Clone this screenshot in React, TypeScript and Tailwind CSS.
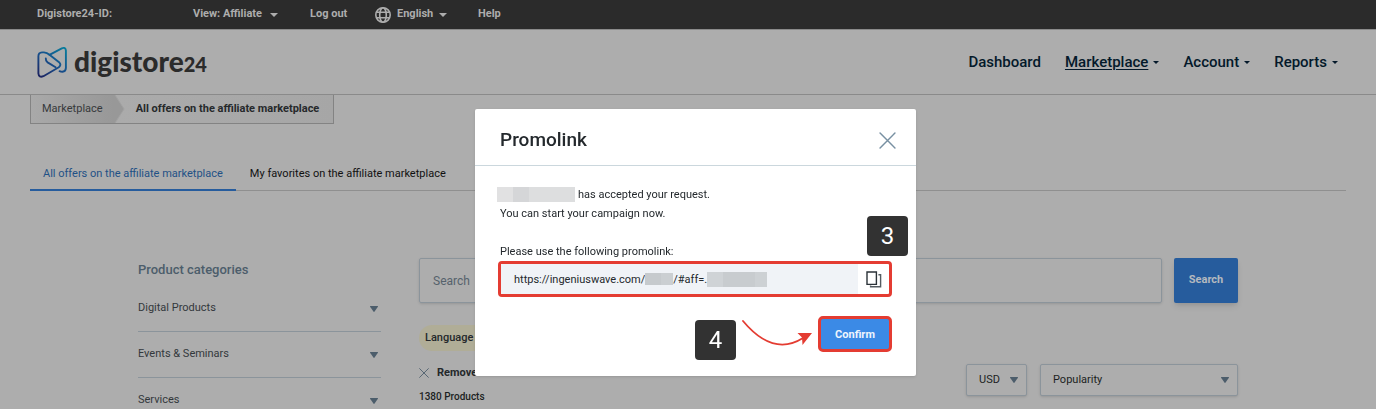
import React from 'react'

const css = {
	topItem: 'flex items-center text-[11px] font-bold text-[#adadad]',
	navItem: 'flex items-center text-[15px] font-medium text-[#04192a]',
	select: 'h-full w-full appearance-none rounded-xs border border-[#8b949b] bg-[#adadad] pl-3 text-[11px] text-[#1c1f22] shadow-sm outline-none',
	badge: 'flex h-10 w-[41px] items-center justify-center rounded-sm bg-[#323232] text-2xl text-white',
}

const categories = ['Digital Products', 'Events & Seminars', 'Services']

const navLinks = [
	{ label: 'Dashboard', menu: false },
	{ label: 'Marketplace', menu: true, active: true },
	{ label: 'Account', menu: true },
	{ label: 'Reports', menu: true },
]

const Caret = ({ className }: { className?: string }) => (
	<svg className={ className } viewBox="0 0 8 4" fill="currentColor" aria-hidden="true">
		<path d="M0 0h8L4 4z" />
	</svg>
)

const Triangle = ({ className }: { className?: string }) => (
	<svg className={ className } width="8" height="6" viewBox="0 0 8 6" fill="#4c5d6b" aria-hidden="true">
		<path d="M.5 0h7q.8 0 .4.7L4.6 5.6Q4 6.3 3.4 5.6L.1.7Q-.3 0 .5 0z" />
	</svg>
)

const Cross = ({ className }: { className?: string }) => (
	<svg className={ className } viewBox="0 0 16 16" fill="none" stroke="currentColor" strokeWidth="1.4" strokeLinecap="round" aria-hidden="true">
		<path d="M1 1l14 14M15 1L1 15" />
	</svg>
)

const Globe = () => (
	<svg width="16" height="16" viewBox="0 0 16 16" fill="none" stroke="currentColor" strokeWidth="1.6" aria-hidden="true">
		<circle cx="8" cy="8" r="7.2" />
		<ellipse cx="8" cy="8" rx="3.3" ry="7.2" />
		<path d="M1.3 5.3h13.4M1.3 10.7h13.4" />
	</svg>
)

const Logo = () => (
	<a href="#" className="flex items-center gap-[7px]">
		<svg width="30" height="31" viewBox="0 0 30 31" fill="none" strokeWidth="1.9" strokeLinecap="round" strokeLinejoin="round" aria-hidden="true">
			<defs>
				<linearGradient id="mark" x1="4" y1="30" x2="26" y2="0" gradientUnits="userSpaceOnUse">
					<stop stopColor="#1c2461" />
					<stop offset=".5" stopColor="#17508c" />
					<stop offset="1" stopColor="#087c9c" />
				</linearGradient>
			</defs>
			<g stroke="url(#mark)">
				<path d="M12.500 7.800L24.800 1.400Q28.600-.2 28.900 3.600V21Q28.700 24.600 25.500 24.800Q23.800 24.800 22.600 24.200" />
				<path d="M12.500 7.800Q10 5.600 7 5.400H5Q1.400 5.600 1.400 9.200V26.400Q1.800 31 6.400 29.200L21.800 20.200Q24.600 18 22.400 15.600L12.500 7.800" />
				<path d="M18.600 20.200L10.600 15.400Q8.600 14 8.800 11.400" />
			</g>
		</svg>
		<span className="pb-[2px] font-['Lato',sans-serif] text-[28px] leading-8 font-black text-[#2b2b2b]">
			digistore<span className="text-xl">24</span>
		</span>
	</a>
)

const TopBar = () => (
	<div className="flex h-[29px] items-center bg-[#2b2b2b] px-[37px]">
		<span className={ `${css.topItem} w-[156px]` }>Digistore24-ID:</span>
		<button type="button" className={ `${css.topItem} w-[117px] gap-2` }>
			View: Affiliate <Caret className="w-2" />
		</button>
		<a href="#" className={ `${css.topItem} w-[65px]` }>Log out</a>
		<button type="button" className={ `${css.topItem} w-[103px] gap-[6px]` }>
			<Globe /> English <Caret className="w-2" />
		</button>
		<a href="#" className={ css.topItem }>Help</a>
	</div>
)

const Header = () => (
	<header className="flex h-[66px] items-center justify-between border-y border-[#8a8a8a] pr-[38px] pl-[37px]">
		<Logo />
		<nav className="flex gap-6">
			{ navLinks.map(({ label, menu, active }) => (
				<a key={ label } href="#" className={ `${css.navItem} gap-[5px]` }>
					<span className={ active ? 'underline underline-offset-2' : '' }>{ label }</span>
					{ menu && <Caret className="w-[6px]" /> }
				</a>
			)) }
		</nav>
	</header>
)

const Breadcrumb = () => (
	<nav className="mx-[30px] flex h-[29px] w-fit border border-t-0 border-[#838383] bg-linear-to-r from-[#adadad] to-[#a6a6a6] text-[11px]">
		<a href="#" className="flex items-center bg-linear-to-r from-[#a9a9a9] to-[#989898] pr-[10px] pl-[11px] text-[#36393b]">Marketplace</a>
		<svg className="h-full w-3" viewBox="0 0 12 28" preserveAspectRatio="none" aria-hidden="true">
			<path d="M0 0h2l9 14-9 14H0z" fill="#989898" />
			<path d="M2 0l9 14-9 14" fill="none" stroke="#a1a1a1" />
		</svg>
		<span className="flex items-center pr-[14px] pl-[11px] font-bold text-[#26292b]">All offers on the affiliate marketplace</span>
	</nav>
)

const Tabs = () => (
	<div className="mx-[30px] mt-8 flex h-[35px] border-b border-[#8f8f8f] text-[11px]">
		<button type="button" className="-mb-px border-b-2 border-[#265c9d] px-[13px] pt-1 text-[#1f5186]">All offers on the affiliate marketplace</button>
		<button type="button" className="px-[14px] pt-[3px] text-[#111]">My favorites on the affiliate marketplace</button>
	</div>
)

const Categories = () => (
	<aside className="w-[243px] shrink-0">
		<h2 className="mb-[6px] pt-[2px] text-[13px] leading-5 font-medium text-[#4c5d6b]">Product categories</h2>
		<ul className="divide-y divide-[#8b949b]">
			{ categories.map((name) => (
				<li key={ name }>
					<button type="button" className="flex h-[45px] w-full items-center justify-between pr-[3px] text-[11px] text-[#33383c]">
						{ name } <Triangle />
					</button>
				</li>
			)) }
		</ul>
	</aside>
)

const Offers = () => (
	<section className="flex-1">
		<form className="flex h-[45px] gap-3">
			<input aria-label="Search" placeholder="Search" className="min-w-0 flex-1 rounded-xs border border-[#8b949b] px-[13px] text-xs text-[#33383c] shadow-sm outline-none placeholder:text-[#56626c]" />
			<button type="submit" className="w-16 rounded-xs bg-[#265c9d] text-[11px] font-bold text-[#b4b9bf] shadow-md">Search</button>
		</form>
		<div className="mt-[22px] flex h-[26px] w-36 items-center rounded-full bg-[#b0ad97] px-[6px] text-[11px] font-medium text-[#24282b]">Language English</div>
		<div className="mt-3 flex items-start justify-between">
			<div>
				<button type="button" className="flex h-5 items-center gap-2 text-[11px] font-bold text-[#24282b]">
					<Cross className="size-[10px] text-[#4c5d6b]" /> Remove all filters
				</button>
				<p className="mt-1 text-[10px] leading-5 font-medium text-[#1c1f22]">1380 Products</p>
			</div>
			<div className="mt-px flex h-8 gap-[13px]">
				<div className="relative w-[61px]">
					<select aria-label="Currency" className={ css.select }>
						<option>USD</option>
					</select>
					<Triangle className="pointer-events-none absolute top-[13px] right-[9px]" />
				</div>
				<div className="relative w-[198px]">
					<select aria-label="Sort by" className={ css.select }>
						<option>Popularity</option>
					</select>
					<Triangle className="pointer-events-none absolute top-[13px] right-[9px]" />
				</div>
			</div>
		</div>
	</section>
)

const PromolinkModal = () => (
	<div className="fixed inset-0 flex items-start justify-center overflow-hidden pt-[109px] pl-[15px]">
		<div role="dialog" aria-labelledby="promolink-title" className="w-[441px] rounded-xs bg-white text-[11px] text-[#24292d] shadow-sm">
			<div className="flex h-[57px] items-center justify-between border-b border-[#cbd7dd] pr-5 pl-[25px]">
				<h1 id="promolink-title" className="pt-[6px] text-[19px] leading-6 font-medium">Promolink</h1>
				<button type="button" aria-label="Close" className="pt-[6px] text-[#7890a2]">
					<Cross className="size-[17px]" />
				</button>
			</div>
			<div className="px-6 pt-[19px] pb-4 leading-[19px]">
				<p className="flex items-center gap-[3px]">
					<span className="-ml-[2px] flex h-[15px] w-[78px]">
						<span className="w-4 bg-[#e1e1e2]" />
						<span className="w-4 bg-[#d5d6d8]" />
						<span className="flex-1 bg-[#dddedf]" />
					</span>
					has accepted your request.
				</p>
				<p className="pl-px">You can start your campaign now.</p>
				<label htmlFor="promolink" className="mt-5 block pl-px leading-[18px]">Please use the following promolink:</label>
				<div className="relative -ml-px flex h-9 rounded-[4px] border-3 border-[#e43c32]">
					<output id="promolink" className="flex flex-1 items-center bg-[#f0f3f7] pl-[13px]">
						https://ingeniuswave.com/
						<span className="flex h-3 w-7">
							<span className="flex-1 bg-[#c6cacd]" />
							<span className="w-3 bg-[#cbcfd2]" />
						</span>
						/#aff=.
						<span className="flex h-[15px] w-[60px]">
							<span className="w-4 bg-[#cfd3d6]" />
							<span className="flex-1 bg-[#c8cccf]" />
							<span className="w-3 bg-[#cdd1d4]" />
						</span>
					</output>
					<button type="button" aria-label="Copy promolink" className="flex w-[31px] items-center justify-center">
						<svg width="16" height="17" viewBox="0 0 16 17" fill="none" stroke="#2b3238" strokeWidth="1.4" aria-hidden="true">
							<path d="M1 1h9.400v12.400H1z" />
							<path d="M12.400 3.800h2.200v12H4.600v-1.200" stroke="#545b61" />
						</svg>
					</button>
					<span className={ `${css.badge} absolute -top-12 -right-[19px]` }>3</span>
				</div>
				<div className="mt-[19px] flex items-start justify-end">
					<span className={ `${css.badge} mt-1` }>4</span>
					<svg className="mx-[5px] mt-1" width="72" height="30" viewBox="0 0 72 30" aria-hidden="true">
						<path d="M2 1Q32 37 62 18" fill="none" stroke="#e43c32" strokeWidth="1.8" strokeLinecap="round" />
						<path d="M71 13L56.500 13L61 17.500L61.500 25z" fill="#e43c32" />
					</svg>
					<button type="button" className="h-9 w-[74px] rounded-[5px] border-3 border-[#e43c32] bg-[#3b8ae6] font-bold text-[#eef5fd]">Confirm</button>
				</div>
			</div>
		</div>
	</div>
)

const App = () => {
	return (
		<div className="h-screen overflow-hidden bg-[#adadad] font-['Roboto',sans-serif]">
			<TopBar />
			<Header />
			<Breadcrumb />
			<Tabs />
			<main className="mx-auto mt-[67px] flex max-w-[1100px] gap-[38px]">
				<Categories />
				<Offers />
			</main>
			<PromolinkModal />
		</div>
	)
}

export default App
